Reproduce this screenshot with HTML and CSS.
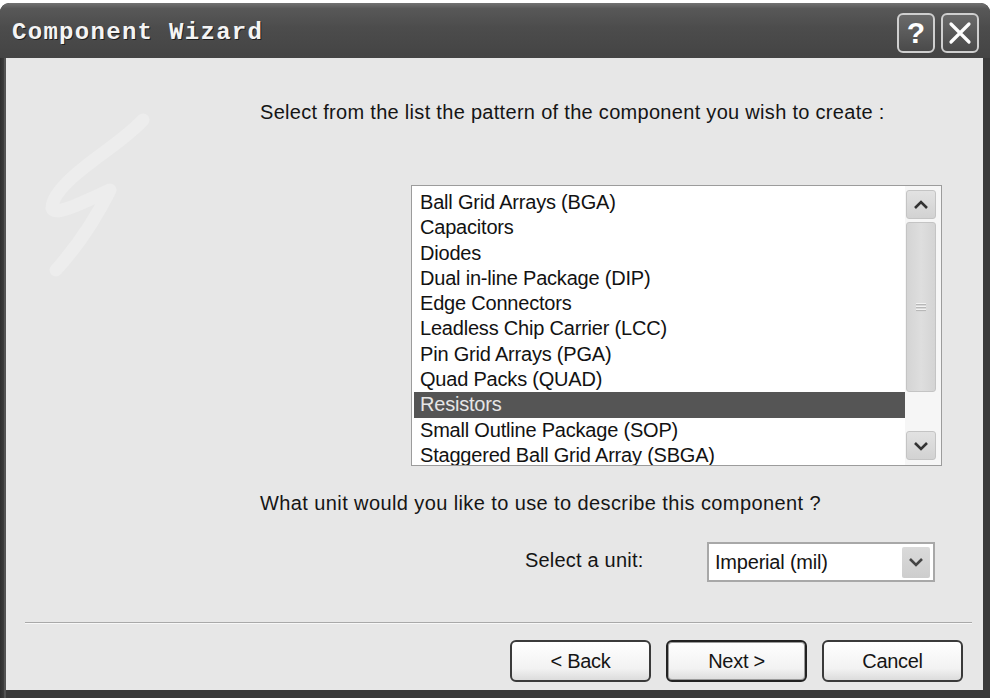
FILE: index.html
```html
<!DOCTYPE html>
<html>
<head>
<meta charset="utf-8">
<link rel="stylesheet" href="styles.css">
</head>
<body>
<div class="window">
  <div class="titlebar">
    <span class="title">Component Wizard</span>
    <div class="tbuttons">
      <div class="tbtn help">?</div>
      <div class="tbtn close">
        <svg width="24" height="24" viewBox="0 0 24 24"><path d="M3 3 L21 21 M21 3 L3 21" stroke="#fff" stroke-width="3.2" stroke-linecap="round"/></svg>
      </div>
    </div>
  </div>
  <div class="frame">
    <div class="client">
      <div class="top">
        <div class="side">
          <svg class="mark" width="150" height="200" viewBox="0 0 150 200">
            <path d="M137 32 C120 50 100 62 80 78 C62 92 46 108 46 120 C48 128 70 118 104 102 C90 130 70 160 50 182" fill="none" stroke="#ededed" stroke-width="13" stroke-linecap="round" stroke-linejoin="round"/>
          </svg>
        </div>
        <div class="main">
          <p class="heading">Select from the list the pattern of the component you wish to create :</p>
          <div class="listbox">
            <ul class="items">
              <li>Ball Grid Arrays (BGA)</li>
              <li>Capacitors</li>
              <li>Diodes</li>
              <li>Dual in-line Package (DIP)</li>
              <li>Edge Connectors</li>
              <li>Leadless Chip Carrier (LCC)</li>
              <li>Pin Grid Arrays (PGA)</li>
              <li>Quad Packs (QUAD)</li>
              <li class="sel">Resistors</li>
              <li>Small Outline Package (SOP)</li>
              <li>Staggered Ball Grid Array (SBGA)</li>
            </ul>
            <div class="scrollbar">
              <div class="sbtn">
                <svg width="16" height="10" viewBox="0 0 16 10"><path d="M2 8 L8 2 L14 8" fill="none" stroke="#333" stroke-width="2.6"/></svg>
              </div>
              <div class="thumb">
                <div class="grip"></div>
              </div>
              <div class="track"></div>
              <div class="sbtn">
                <svg width="16" height="10" viewBox="0 0 16 10"><path d="M2 2 L8 8 L14 2" fill="none" stroke="#333" stroke-width="2.6"/></svg>
              </div>
            </div>
          </div>
          <p class="question">What unit would you like to use to describe this component ?</p>
          <div class="unitrow">
            <span class="unitlabel">Select a unit:</span>
            <div class="combo">
              <span class="combotext">Imperial (mil)</span>
              <div class="cbtn">
                <svg width="16" height="10" viewBox="0 0 16 10"><path d="M2 2 L8 8 L14 2" fill="none" stroke="#444" stroke-width="2.6"/></svg>
              </div>
            </div>
          </div>
        </div>
      </div>
      <div class="separator"></div>
      <div class="buttons">
        <div class="pbtn">&lt; Back</div>
        <div class="pbtn default">Next &gt;</div>
        <div class="pbtn">Cancel</div>
      </div>
    </div>
  </div>
</div>
</body>
</html>
```
FILE: styles.css
```css
html, body {
  margin: 0;
  padding: 0;
  background: #ffffff;
}
body {
  width: 990px;
  height: 698px;
  overflow: hidden;
  font-family: "Liberation Sans", Arial, sans-serif;
}
.window {
  margin-top: 3px;
  height: 695px;
  background: #3a3a3a;
  border-radius: 9px 9px 0 0;
  display: flex;
  flex-direction: column;
  overflow: hidden;
}
.titlebar {
  height: 55px;
  flex: none;
  display: flex;
  align-items: center;
  justify-content: space-between;
  padding: 0 11px 0 12px;
  background: linear-gradient(#727272 0, #585858 10%, #4c4c4c 45%, #444 100%);
  border-radius: 9px 9px 0 0;
}
.title {
  font-family: "Liberation Mono", "DejaVu Sans Mono", monospace;
  font-weight: bold;
  font-size: 24px;
  letter-spacing: 1.3px;
  color: #f4f4f4;
  text-shadow: 1px 1px 0 #1e1e1e;
  margin-top: 4px;
}
.tbuttons {
  display: flex;
  gap: 6px;
  margin-top: 5px;
}
.tbtn {
  width: 34px;
  height: 36px;
  border: 2px solid #cfcfcf;
  border-radius: 6px;
  background: linear-gradient(#6a6a6a, #4a4a4a);
  display: flex;
  align-items: center;
  justify-content: center;
  color: #fff;
}
.help {
  font-family: "Liberation Sans", Arial, sans-serif;
  font-weight: bold;
  font-size: 30px;
  line-height: 1;
}
.frame {
  flex: 1;
  display: flex;
  padding: 0 7px 8px 6px;
  background: linear-gradient(90deg, #2e2e2e 0, #3c3c3c 4px, #6a6a6a 5px, #3a3a3a 6px);
}
.client {
  flex: 1;
  background: #e7e7e7;
  display: flex;
  flex-direction: column;
}
.top {
  display: flex;
  flex: 1;
}
.side {
  width: 254px;
  flex: none;
}
.mark {
  display: block;
  margin-top: 30px;
}
.main {
  flex: 1;
  padding-top: 42px;
}
.heading, .question {
  margin: 0;
  font-size: 20px;
  line-height: 24px;
  color: #151515;
}
.heading {
  letter-spacing: 0.3px;
}
.listbox {
  margin: 61px 0 0 151px;
  width: 529px;
  height: 279px;
  border: 1px solid #9c9c9c;
  background: #ffffff;
  display: flex;
  overflow: hidden;
}
.items {
  list-style: none;
  margin: 0;
  padding: 4px 0 0 2px;
  flex: 1;
}
.items li {
  font-size: 20px;
  line-height: 25.3px;
  height: 25.3px;
  padding-left: 6px;
  color: #121212;
  letter-spacing: -0.2px;
  white-space: nowrap;
}
.items li.sel {
  background: #555555;
  color: #e6e6e6;
}
.scrollbar {
  width: 30px;
  flex: none;
  background: #f6f6f6;
  padding: 4px 5px 5px 1px;
  display: flex;
  flex-direction: column;
}
.sbtn {
  height: 27px;
  border: 1px solid #c4c4c4;
  border-radius: 3px;
  background: linear-gradient(#e2e2e2, #d2d2d2);
  display: flex;
  align-items: center;
  justify-content: center;
}
.thumb {
  height: 168px;
  margin-top: 3px;
  border: 1px solid #c4c4c4;
  border-radius: 3px;
  background: linear-gradient(90deg, #d4d4d4, #dedede 50%, #d4d4d4);
  display: flex;
  align-items: center;
  justify-content: center;
}
.grip {
  width: 10px;
  height: 9px;
  background: repeating-linear-gradient(#f2f2f2 0, #f2f2f2 1px, #b8b8b8 1px, #b8b8b8 2px, #d8d8d8 2px, #d8d8d8 3px);
}
.track {
  flex: 1;
}
.question {
  margin-top: 25px;
  letter-spacing: 0.4px;
}
.unitrow {
  display: flex;
  align-items: center;
  margin: 27px 0 0 265px;
}
.unitlabel {
  width: 182px;
  font-size: 20px;
  color: #151515;
  letter-spacing: 0.2px;
  margin-top: -4px;
}
.combo {
  box-sizing: border-box;
  width: 228px;
  height: 40px;
  border: 2px solid #a8a8a8;
  background: #fff;
  display: flex;
  align-items: center;
  justify-content: space-between;
  padding: 0 3px 0 6px;
}
.combotext {
  font-size: 20px;
  color: #141414;
  letter-spacing: -0.2px;
}
.cbtn {
  width: 28px;
  height: 31px;
  background: linear-gradient(#dadada, #cdcdcd);
  border-radius: 2px;
  display: flex;
  align-items: center;
  justify-content: center;
}
.separator {
  flex: none;
  height: 1px;
  margin: 0 11px 0 19px;
  background: #a9a9a9;
  border-bottom: 1px solid #f8f8f8;
}
.buttons {
  flex: none;
  display: flex;
  justify-content: flex-end;
  gap: 15px;
  padding: 16px 20px 8px 0;
}
.pbtn {
  width: 137px;
  height: 38px;
  border: 2px solid #3a3a3a;
  border-radius: 6px;
  background: linear-gradient(#ffffff, #f2f2f2 70%, #dcdcdc);
  display: flex;
  align-items: center;
  justify-content: center;
  font-size: 20px;
  color: #151515;
  letter-spacing: -0.3px;
}
.pbtn.default {
  border-color: #222;
  box-shadow: inset 0 0 0 1px #9a9a9a;
}
```
